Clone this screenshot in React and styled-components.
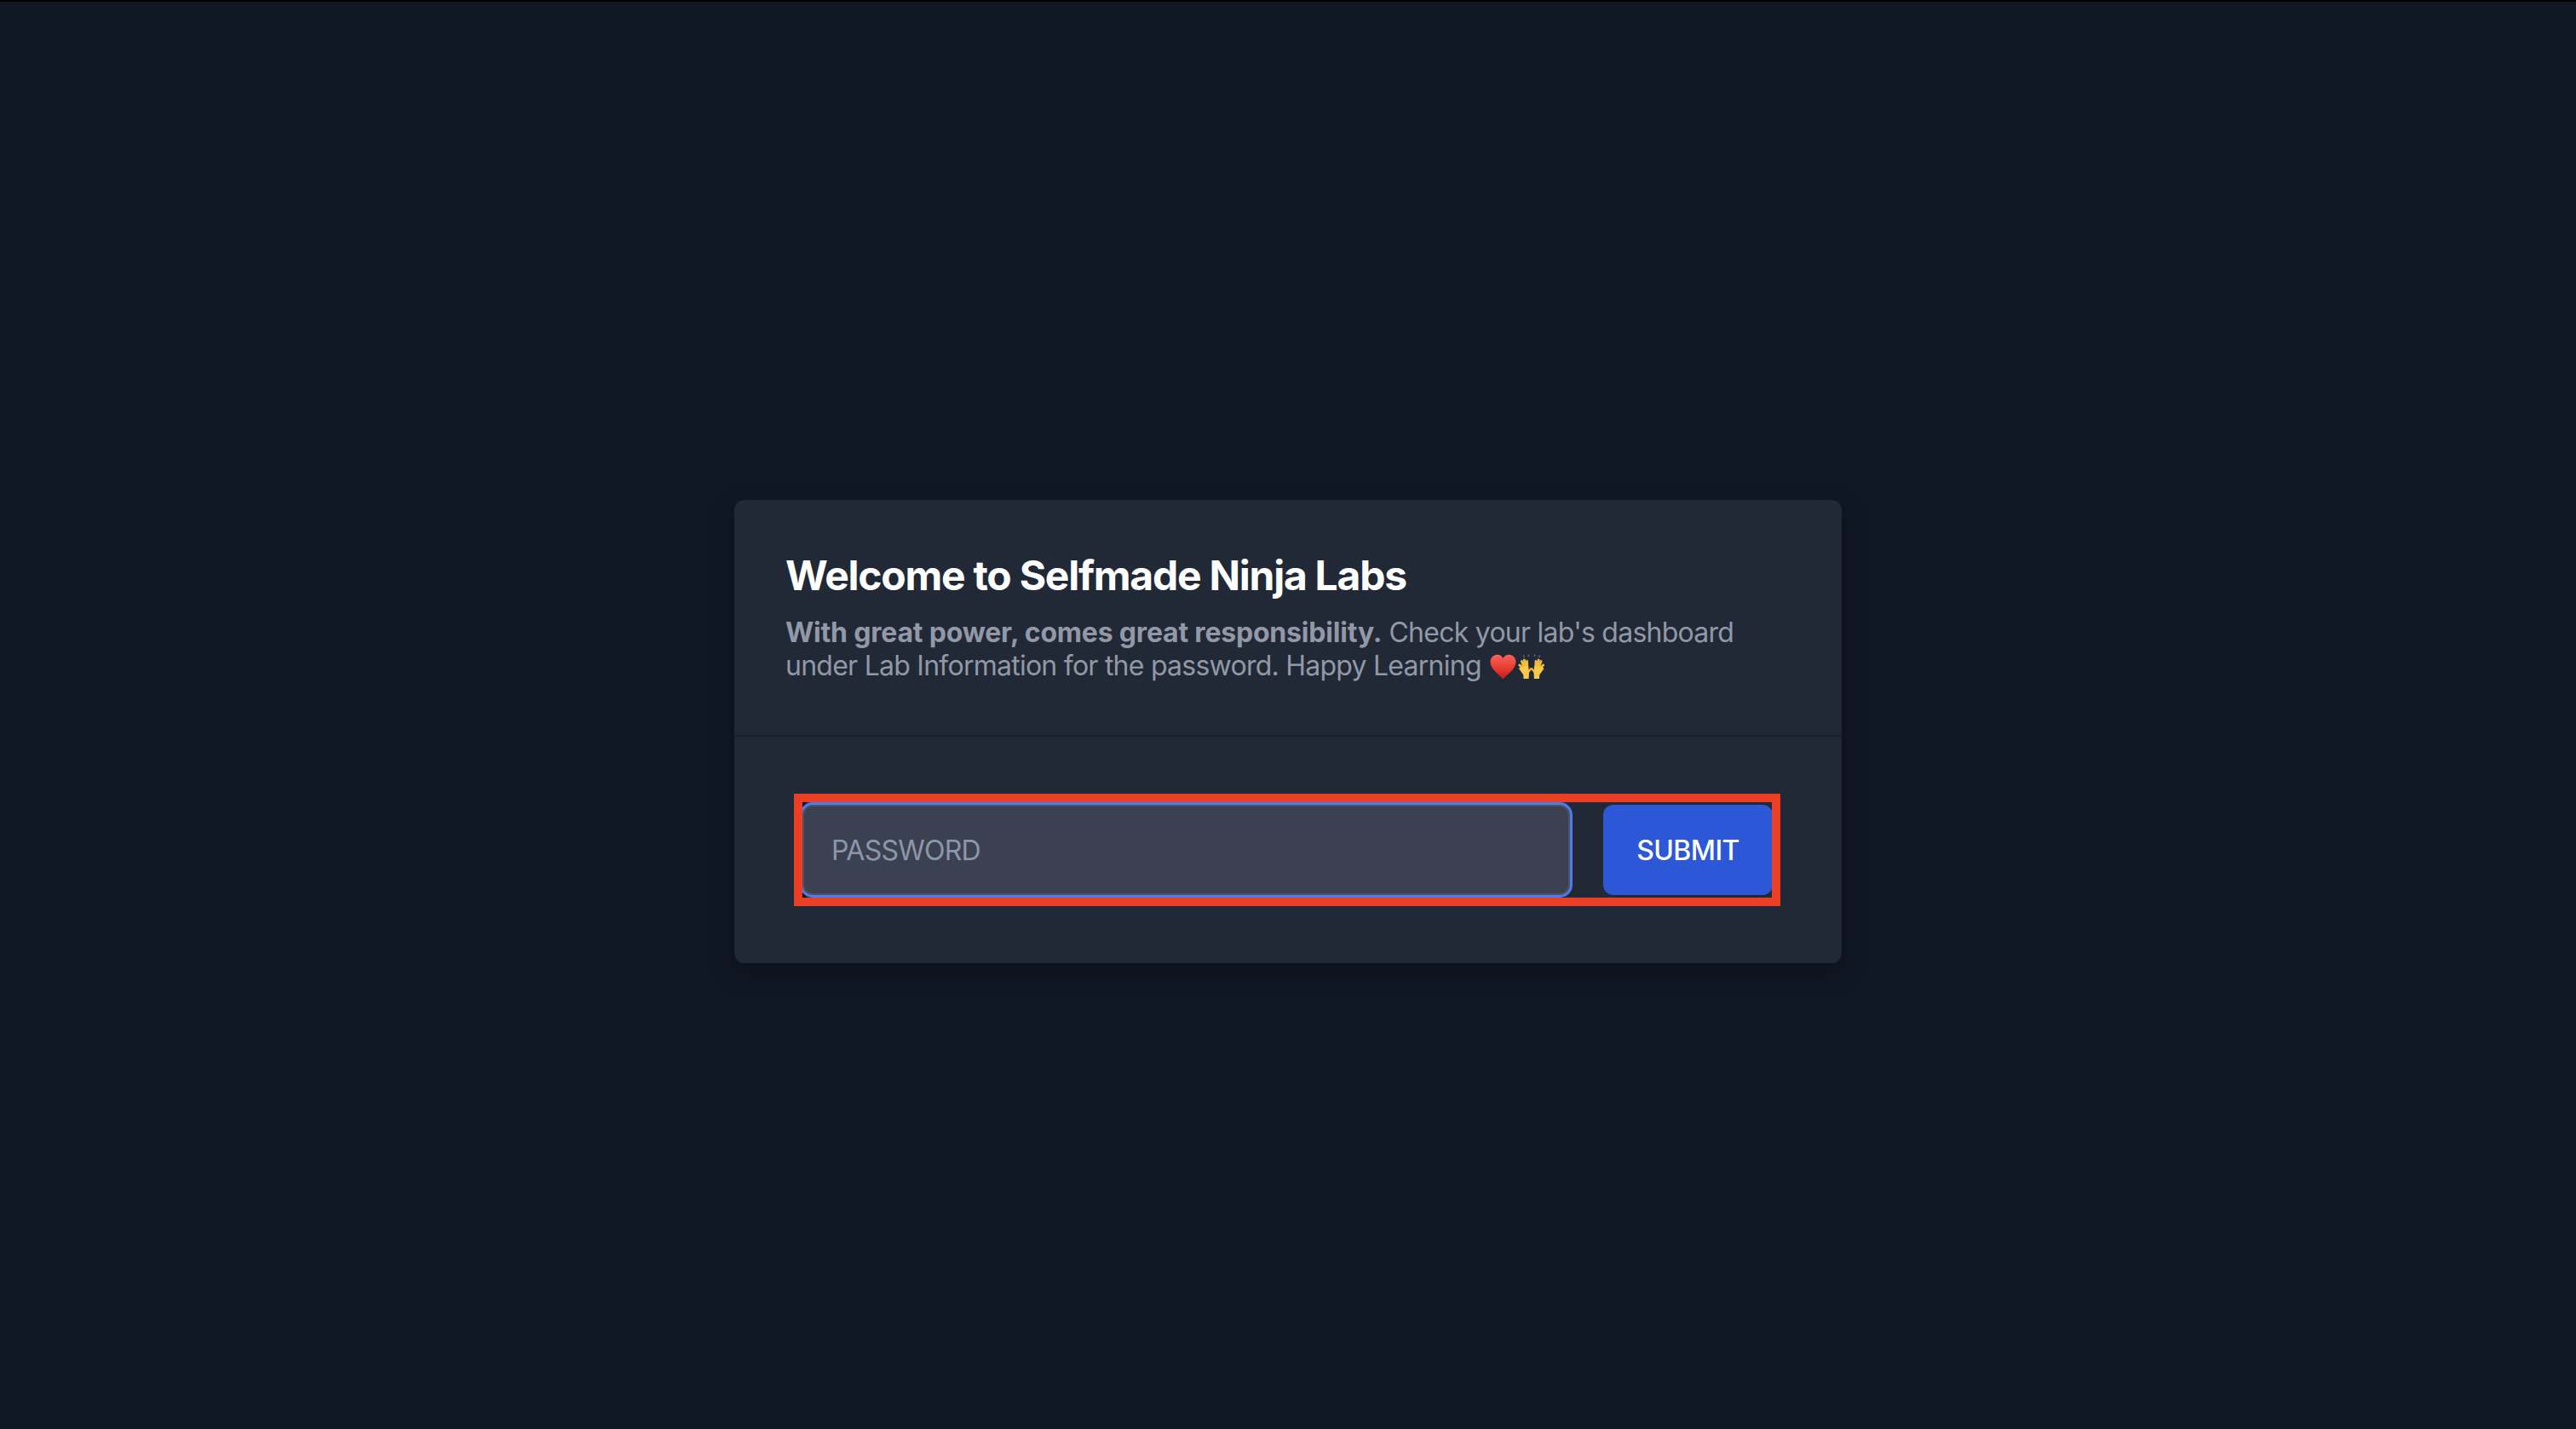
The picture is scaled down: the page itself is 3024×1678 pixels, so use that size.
import React from "react";
import styled, { createGlobalStyle } from "styled-components";

const Global = createGlobalStyle`
  html, body { margin: 0; padding: 0; background: #111825; }
  * { box-sizing: border-box; }
`;

const Page = styled.main`
  height: 1678px;
  border-top: 2px solid #000;
  padding-top: 585px;
  display: flex;
  justify-content: center;
  align-items: flex-start;
  background: #111825;
  font-family: Inter, "Liberation Sans", sans-serif;
`;

const Card = styled.section`
  width: 1300px;
  height: 544px;
  background: #212836;
  border-radius: 12px;
  box-shadow: 0 10px 30px rgba(0, 0, 0, 0.35);
`;

const Header = styled.header`
  height: 278px;
  padding: 57px 60px 0;
  border-bottom: 2px solid #171d29;
`;

const Title = styled.h1`
  margin: 0 0 15px;
  font-size: 48px;
  line-height: 64px;
  font-weight: 700;
  letter-spacing: -1.25px;
  color: #fff;
`;

const Description = styled.p`
  margin: 0;
  font-size: 32px;
  line-height: 39px;
  letter-spacing: -0.75px;
  color: #9298a6;
  strong { font-weight: 700; letter-spacing: -0.2px; }
`;

const Emoji = styled.svg`
  display: inline-block;
  width: ${(p) => p.$w}px;
  height: 30px;
  margin-left: 2px;
  vertical-align: -5px;
`;

const Form = styled.form`
  margin: 67px 0 0 70px;
  width: 1158px;
  height: 132px;
  border: 10px solid #ea3f25;
  padding: 3px 0;
  display: flex;
  gap: 39px;
  overflow: hidden;
  background: linear-gradient(#0c0f16, #0c0f16) 0 0 / 4px 100% no-repeat;
`;

const Input = styled.input`
  flex: none;
  width: 901px;
  height: 106px;
  padding: 0 32px;
  margin: 0;
  border: 2px solid #4b5261;
  border-radius: 12px;
  outline: none;
  background: #3b4150;
  box-shadow: 0 0 0 3px #4b7cf0;
  font: 400 32px Inter, "Liberation Sans", sans-serif;
  letter-spacing: -0.75px;
  color: #fff;
  &::placeholder { color: #8c97a9; opacity: 1; }
`;

const Button = styled.button`
  flex: none;
  width: 199px;
  height: 106px;
  border: 0;
  border-radius: 12px;
  padding: 0;
  background: #2c57d6;
  color: #fff;
  font: 500 32px Inter, "Liberation Sans", sans-serif;
  letter-spacing: -0.6px;
`;

const Hand = () => (
  <g>
    <path d="M5.500 16.500L1.800 13M6.800 15L4.400 8.500M8.800 14.500L7.300 7M10.800 15L10.500 8.500" stroke="#f3bd3f" strokeWidth="2.800" strokeLinecap="round" fill="none" />
    <path d="M12 21L15 17.500" stroke="#f0b233" strokeWidth="2.600" strokeLinecap="round" fill="none" />
    <path d="M4 15.500L12.200 14L13 22L12.600 29H6.500L6.300 24.500L1 17L2.500 15.500z" fill="#f6c84c" />
  </g>
);

export default function App() {
  return (
    <Page>
      <Global />
      <Card>
        <Header>
          <Title>Welcome to Selfmade Ninja Labs</Title>
          <Description>
            <strong>With great power, comes great responsibility.</strong> Check your lab's dashboard under Lab Information for the password. Happy Learning{" "}
            <Emoji $w={31} viewBox="0 0 31 30" role="img" aria-label="❤️">
              <defs>
                <linearGradient id="heart" x1="0" y1="0" x2="0" y2="1">
                  <stop offset="0" stopColor="#f6655c" />
                  <stop offset="0.55" stopColor="#e83a30" />
                  <stop offset="1" stopColor="#c01d1c" />
                </linearGradient>
              </defs>
              <path d="M15.500 29.500C11 24.500 .5 17.500 .5 9.300 .5 4.500 4.100 .8 8.500 .8c3 0 5.600 1.500 7 4.200C16.900 2.300 19.500 .8 22.500 .8 26.900 .8 30.500 4.500 30.500 9.300 30.500 17.500 20 24.500 15.500 29.500z" fill="url(#heart)" />
            </Emoji>
            <Emoji $w={32} viewBox="0 0 32 30" role="img" aria-label="🙌">
              <path d="M6.500 1.500l.8 2.300M12.500 .5v2.500M19.500 .5v2.500M25.500 1.500l-.8 2.300" stroke="#666a6e" strokeWidth="1.600" fill="none" />
              <Hand />
              <g transform="translate(31.500 0) scale(-1 1)">
                <Hand />
              </g>
            </Emoji>
          </Description>
        </Header>
        <Form onSubmit={(e) => e.preventDefault()}>
          <Input placeholder="PASSWORD" />
          <Button>SUBMIT</Button>
        </Form>
      </Card>
    </Page>
  );
}
